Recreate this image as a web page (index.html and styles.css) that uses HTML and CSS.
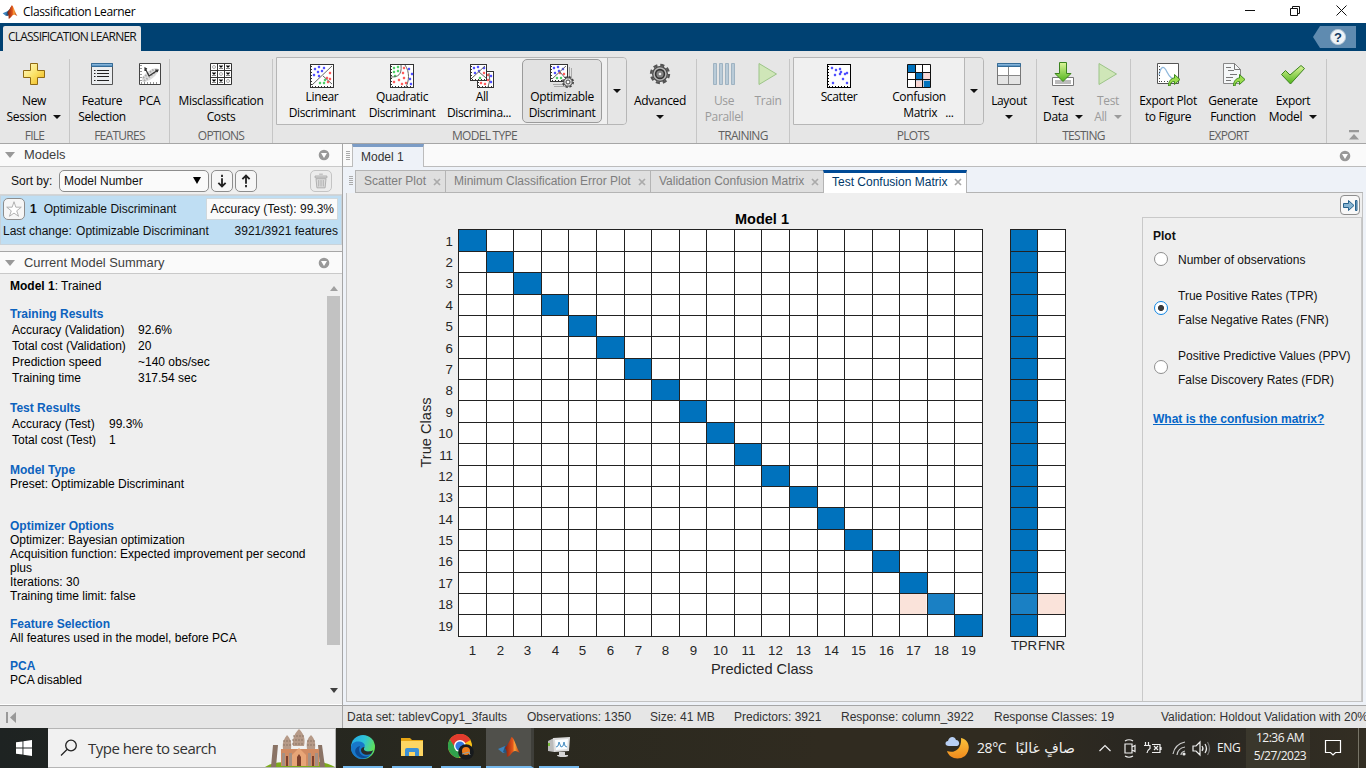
FILE: index.html
```html
<!DOCTYPE html>
<html lang="en">
<head>
<meta charset="utf-8">
<title>Classification Learner</title>
<link rel="stylesheet" href="styles.css">
</head>
<body>
<svg class="defs" width="0" height="0">
  <defs>
    <linearGradient id="gold" x1="0" y1="0" x2="1" y2="1"><stop offset="0" stop-color="#fffbd0"/><stop offset=".5" stop-color="#fbe36a"/><stop offset="1" stop-color="#eeb211"/></linearGradient>
    <linearGradient id="green" x1="0" y1="0" x2="0" y2="1"><stop offset="0" stop-color="#dcf59a"/><stop offset="1" stop-color="#52b51c"/></linearGradient>
    <linearGradient id="bluebar" x1="0" y1="0" x2="0" y2="1"><stop offset="0" stop-color="#a9cdea"/><stop offset="1" stop-color="#3d7fb4"/></linearGradient>
    <linearGradient id="flame" x1="0" y1="0" x2="1" y2="0"><stop offset="0" stop-color="#7c1e10"/><stop offset=".5" stop-color="#e2541a"/><stop offset=".65" stop-color="#f9a13a"/><stop offset="1" stop-color="#b52e0d"/></linearGradient>
    <linearGradient id="edge1" x1="0" y1="0" x2="1" y2=".4"><stop offset="0" stop-color="#23a7e8"/><stop offset=".55" stop-color="#2fc3d8"/><stop offset="1" stop-color="#5ee05a"/></linearGradient>
    <linearGradient id="moon" x1="0" y1="0" x2="0" y2="1"><stop offset="0" stop-color="#fbc33b"/><stop offset="1" stop-color="#f08a1d"/></linearGradient>
    <symbol id="matlab" viewBox="0 0 24 24">
      <path d="M1 14 8 11 11 16 6 18Z" fill="#3c83bd"/><path d="M8 11C11 9 12 7 14 3L13 14 9 18 6 17Z" fill="#26557f"/>
      <path d="M14.500 2C12 7 11 9 8 13 9 14 10 16 10 22 14 21 15 16 18 16 20 16 21 17 23 18 19 12 17 2 14.500 2Z" fill="url(#flame)"/>
    </symbol>
    <symbol id="arrow" viewBox="0 0 13 13"><path d="M1 12.500C.8 7.500 4 4.500 7 4.500V1L12.500 6 7 11V8C4 8 2.600 9.500 2.600 12.500Z" fill="#9bdc4d" stroke="#3e8b1e"/></symbol>
    <symbol id="gear" viewBox="0 0 24 24"><circle cx="12" cy="12" r="9.800" fill="none" stroke="#555" stroke-width="2.600" stroke-dasharray="4.500 3.197"/><circle cx="12" cy="12" r="8" fill="#b5b5b5" stroke="#4b4b4b" stroke-width="1.400"/><circle cx="12" cy="12" r="4.800" fill="#888" stroke="#333" stroke-width="1.700"/><circle cx="12" cy="12" r="2" fill="#eee" stroke="#555" stroke-width=".6"/></symbol>
    <symbol id="menu" viewBox="0 0 12 12"><circle cx="6" cy="6" r="5.300" fill="#999"/><path d="M3 4h6L6 9Z" fill="#fff"/></symbol>
    <symbol id="pulldown" viewBox="0 0 8 4"><path d="M0 0h8L4 4Z" fill="currentColor"/></symbol>
    <symbol id="play" viewBox="0 0 20 24"><path d="M1 1.500V22.500L18.500 12Z" fill="#cfe6b8" stroke="#9cc488"/></symbol>
    <symbol id="close" viewBox="0 0 8 8"><path d="m1 1 6 6M7 1 1 7" stroke="currentColor" stroke-width="1.700"/></symbol>
  </defs>
</svg>

<header class="titlebar">
  <svg class="app-icon" viewBox="0 0 24 24"><use href="#matlab"/></svg>
  <span class="title">Classification Learner</span>
  <svg class="winctl" viewBox="0 0 120 22" fill="none" stroke="#111"><path d="M4 10.500H14M49.500 8.500h7v7h-7ZM51.500 8.500V6.500h7v7h-2M95.500 5.500l10 10M105.500 5.500l-10 10"/></svg>
</header>

<div class="ribbon-tabs">
  <span class="ribbon-tab">CLASSIFICATION LEARNER</span>
  <svg class="help" viewBox="0 0 43 22"><path d="M7 0H43V22H7L0 11Z" fill="#5f8bb0"/><circle cx="25" cy="11" r="7.600" fill="#eef3f7" stroke="#b8c8d6"/><text x="25" y="15.500" text-anchor="middle">?</text></svg>
</div>

<div class="ribbon">
  <section class="sec file">
    <div class="tools">
      <div class="tool w66"><svg viewBox="0 0 24 24"><path d="M8.500 1.500h7v7h7v7h-7v7h-7v-7h-7v-7h7Z" fill="url(#gold)" stroke="#8f6a13"/></svg><span>New</span><span>Session <svg class="dd"><use href="#pulldown"/></svg></span></div>
    </div><h3>FILE</h3>
  </section>
  <section class="sec features">
    <div class="tools">
      <div class="tool w60"><svg viewBox="0 0 24 24"><path d="M1.500 1.500h21v21h-21z" fill="#eceef0" stroke="#555"/><path d="M1.500 1.500h21v3h-21z" fill="url(#bluebar)" stroke="#356c98"/><path d="M4 8.500h1.500m1.500 0h12M4 11.500h1.500m1.500 0h12M4 14.500h1.500m1.500 0h12M4 18.500h1.500m1.500 0h12" stroke="#222"/></svg><span>Feature</span><span>Selection</span></div>
      <div class="tool w35"><svg viewBox="0 0 24 24"><path d="M1.500 1.500h21v21h-21z" fill="#fff" stroke="#444"/><ellipse cx="12" cy="13" rx="10" ry="4" transform="rotate(-38 12 13)" fill="#ddd"/><path d="M6 19 20 8M5 16l11-9" stroke="#aaa" stroke-width="2" stroke-dasharray="1.500 1.500"/><path d="m11 14 9-6M11 14 7 6m0 3V6l2 1m8 1h3l-1 2" fill="none" stroke="#333" stroke-width="1.200"/><path d="M3 21h18M3 3v18" stroke="#333" stroke-dasharray="1 2"/></svg><span>PCA</span></div>
    </div><h3>FEATURES</h3>
  </section>
  <section class="sec options">
    <div class="tools"><div class="tool w90"><svg id="costs" viewBox="0 0 24 24"></svg><span>Misclassification</span><span>Costs</span></div></div><h3>OPTIONS</h3>
  </section>
  <section class="sec modeltype">
    <div class="tools">
      <div class="gallery models">
        <div class="cell"><svg viewBox="0 0 24 24" data-scatter="linear"></svg><span>Linear</span><span>Discriminant</span></div>
        <div class="cell"><svg viewBox="0 0 24 24" data-scatter="quadratic"></svg><span>Quadratic</span><span>Discriminant</span></div>
        <div class="cell all"><svg viewBox="0 0 24 24" data-scatter="all"></svg><span>All</span><span>Discrimina...</span></div>
        <div class="cell on"><svg viewBox="0 0 24 24" data-scatter="optim"></svg><span>Optimizable</span><span>Discriminant</span></div>
        <div class="more"><svg class="dd"><use href="#pulldown"/></svg></div>
      </div>
      <div class="tool w66"><svg viewBox="0 0 24 24"><use href="#gear" x="1" y="1" width="22" height="22"/></svg><span>Advanced</span><span><svg class="dd solo"><use href="#pulldown"/></svg></span></div>
    </div><h3>MODEL TYPE</h3>
  </section>
  <section class="sec training off">
    <div class="tools">
      <div class="tool w50"><svg viewBox="0 0 24 24"><path d="M1.500 1.500h3v21h-3zM7.500 1.500h3v21h-3zM13.500 1.500h3v21h-3zM19.500 1.500h3v21h-3z" fill="#b9cbd8" stroke="#9fb3c2"/></svg><span>Use</span><span>Parallel</span></div>
      <div class="tool w38"><svg viewBox="0 0 20 24"><use href="#play"/></svg><span>Train</span></div>
    </div><h3>TRAINING</h3>
  </section>
  <section class="sec plots">
    <div class="tools">
      <div class="gallery">
        <div class="cell"><svg viewBox="0 0 24 24" data-scatter="plain"></svg><span>Scatter</span></div>
        <div class="cell"><svg viewBox="0 0 24 24"><path d="M.5.500h23v23H.5z" fill="#fff"/><path d="M.5.500h8v8h-8zM8.500 8.500h8v8h-8zM16.500 16.500h7v7h-7z" fill="#0072bd"/><path d="M16.500 8.500h7v8h-7zM8.500 16.500h8v7h-8z" fill="#f9d8d5"/><path d="M.5.500h23v23H.5zM8.500 0v24M15.500 0v24M0 8.500h24M0 15.500h24" fill="none" stroke="#111"/></svg><span>Confusion</span><span class="cut">Matrix <i>...</i></span></div>
        <div class="more"><svg class="dd"><use href="#pulldown"/></svg></div>
      </div>
      <div class="tool w50"><svg class="wide" viewBox="0 0 26 24"><path d="M1.500 1.500h23v21h-23z" fill="#fff" stroke="#777"/><path d="M2 13h22v9H2z" fill="#e4e4e4"/><path d="M1.500 1.500h23v3h-23z" fill="url(#bluebar)" stroke="#356c98"/><path d="M12.500 5v17M2 13.500h22" stroke="#888"/></svg><span>Layout</span><span><svg class="dd solo"><use href="#pulldown"/></svg></span></div>
    </div><h3>PLOTS</h3>
  </section>
  <section class="sec testing">
    <div class="tools">
      <div class="tool w50"><svg viewBox="0 0 24 24"><path d="M1.500 15.500h21v8h-21z" fill="#fff" stroke="#777"/><path d="M4 18h16v4H4z" fill="#bbb"/><path d="M8.500.500h7v11h4.500L12 19.500 4 11.500h4.500Z" fill="url(#green)" stroke="#3b831e"/></svg><span>Test</span><span>Data <svg class="dd"><use href="#pulldown"/></svg></span></div>
      <div class="tool w40 off"><svg viewBox="0 0 20 24"><use href="#play"/></svg><span>Test</span><span>All <svg class="dd"><use href="#pulldown"/></svg></span></div>
    </div><h3>TESTING</h3>
  </section>
  <section class="sec export">
    <div class="tools">
      <div class="tool w68"><svg viewBox="0 0 24 24"><path d="M1.500 1.500h21v20h-21z" fill="#fff" stroke="#555"/><path d="M3 13C5 3 8 4 11 10S16 17 22 18" fill="none" stroke="#8fb8dc" stroke-width="1.300"/><path d="M3.500 4v16M5 19.500h9" stroke="#444" stroke-dasharray="1 2"/><use href="#arrow" x="11.500" y="11.500" width="13" height="13"/></svg><span>Export Plot</span><span>to Figure</span></div>
      <div class="tool w62"><svg viewBox="0 0 24 24"><path d="M2.500 1.500h11l6 6v14h-17z" fill="#f5f7f8" stroke="#888"/><path d="M13.500 1.500v6h6M5 5.500h5m-3 3h6m-4 4h7M5 15.500h7M5 18.500h5" fill="none" stroke="#777"/><use href="#arrow" x="11.500" y="11.500" width="13" height="13"/></svg><span>Generate</span><span>Function</span></div>
      <div class="tool w58"><svg class="wide" viewBox="0 0 26 24"><path d="M1.500 12.500 5.500 8.500 10 13 21 3.500 24.500 6.500 10.500 22Z" fill="url(#green)" stroke="#3b831e"/></svg><span>Export</span><span>Model <svg class="dd"><use href="#pulldown"/></svg></span></div>
    </div><h3>EXPORT</h3>
  </section>
  <svg class="minimize" viewBox="0 0 12 11"><path d="M1 0h10v2.200H1zM6 4l5 5.500H1Z" fill="#999"/></svg>
</div>

<main class="work">
  <aside class="left">
    <div class="head"><i class="tri"></i><span>Models</span><svg><use href="#menu"/></svg></div>
    <div class="sort">
      <span class="lbl">Sort by:</span>
      <div class="select"><span>Model Number</span><svg viewBox="0 0 8 7"><path d="M0 0h8L4 7Z"/></svg></div>
      <div class="btn"><svg viewBox="0 0 22 22" fill="none" stroke="#222" stroke-width="2"><path d="M11 4v2.500M11 8v9M7 13l4 4 4-4"/></svg></div>
      <div class="btn"><svg viewBox="0 0 22 22" fill="none" stroke="#222" stroke-width="2"><path d="M11 18v-2.500M11 14V5M7 9l4-4 4 4"/></svg></div>
      <div class="btn trash"><svg viewBox="0 0 22 22" fill="#ddd" stroke="#aaa"><path d="M9 3.500h4M4.500 5.500h13v2h-13zM5.500 8.500h11l-1 10h-9zM8.500 10v7M11 10v7M13.500 10v7"/></svg></div>
    </div>
    <div class="model">
      <div class="row"><div class="btn star"><svg viewBox="0 0 22 22"><path d="m11 3 2 6h6l-5 4 2 6-5-3.500L6 19l2-6-5-4h6Z" fill="#fff" stroke="#aaa"/></svg></div><b>1</b><span>Optimizable Discriminant</span><div class="acc">Accuracy (Test): <em>99.3%</em></div></div>
      <div class="row2"><span>Last change: <em>Optimizable Discriminant</em></span><span>3921/3921 features</span></div>
    </div>
    <div class="head second"><i class="tri"></i><span>Current Model Summary</span><svg><use href="#menu"/></svg></div>
    <div class="summary">
      <div class="text">
        <p class="first"><b>Model 1</b>: Trained</p>
        <h4>Training Results</h4>
        <dl class="wide-dl"><dt>Accuracy (Validation)</dt><dd>92.6%</dd><dt>Total cost (Validation)</dt><dd>20</dd><dt>Prediction speed</dt><dd>~140 obs/sec</dd><dt>Training time</dt><dd>317.54 sec</dd></dl>
        <h4>Test Results</h4>
        <dl><dt>Accuracy (Test)</dt><dd>99.3%</dd><dt>Total cost (Test)</dt><dd>1</dd></dl>
        <h4>Model Type</h4>
        <p class="preset">Preset: Optimizable Discriminant</p>
        <h4>Optimizer Options</h4>
        <p>Optimizer: Bayesian optimization<br>Acquisition function: Expected improvement per second<br>plus<br>Iterations: 30<br>Training time limit: false</p>
        <h4>Feature Selection</h4>
        <p>All features used in the model, before PCA</p>
        <h4>PCA</h4>
        <p>PCA disabled</p>
      </div>
      <div class="scroll"><i class="up"></i><i class="thumb"></i><i class="down"></i></div>
    </div>
  </aside>

  <div class="right">
    <div class="doc-tabs"><i class="grip"></i><span class="doc-tab">Model 1</span><svg><use href="#menu"/></svg></div>
    <div class="fig-tabs"><i class="grip"></i>
      <span class="tab t1">Scatter Plot<svg><use href="#close"/></svg></span>
      <span class="tab t2">Minimum Classification Error Plot<svg><use href="#close"/></svg></span>
      <span class="tab t3">Validation Confusion Matrix<svg><use href="#close"/></svg></span>
      <span class="tab t4">Test Confusion Matrix<svg><use href="#close"/></svg></span>
      <i class="rest"></i>
    </div>
    <div class="figure">
      <svg id="chart" width="795" height="508" viewBox="347 193 795 508"></svg>
      <div class="side">
        <div class="collapse"><svg viewBox="0 0 18 18"><path d="M2.500 7.500h5V4.500L13 9.500l-5.500 5v-3h-5ZM14.500 4.500v10h1.500V4.500Z" fill="#86b4d2" stroke="#27618c"/></svg></div>
        <div class="panel">
          <h5>Plot</h5>
          <label class="opt o1"><i></i><span>Number of observations</span></label>
          <label class="opt o2"><i class="sel"></i><span>True Positive Rates (TPR)<br>False Negative Rates (FNR)</span></label>
          <label class="opt o3"><i></i><span>Positive Predictive Values (PPV)<br>False Discovery Rates (FDR)</span></label>
          <a>What is the confusion matrix?</a>
        </div>
      </div>
    </div>
  </div>
</main>

<footer class="status">
  <div class="status-left"><svg viewBox="0 0 11 11"><path d="M0 0h2v11H0zM10 0v11L4 5.500Z" fill="#999"/></svg></div>
  <div class="status-right"><span class="s1">Data set: tablevCopy1_3faults</span><span class="s2">Observations: 1350</span><span class="s3">Size: 41 MB</span><span class="s4">Predictors: 3921</span><span class="s5">Response: column_3922</span><span class="s6">Response Classes: 19</span><span class="s7">Validation: Holdout Validation with 20%</span></div>
</footer>

<nav class="taskbar">
  <div class="start"><svg viewBox="0 0 16 16" fill="#fff"><path d="M0 2.300 6.500 1.400V7.500H0ZM7.400 1.200 16 0V7.500H7.400ZM0 8.400H6.500V14.600L0 13.700ZM7.400 8.400H16V16L7.400 14.800Z"/></svg></div>
  <div class="search">
    <svg class="mag" viewBox="0 0 18 18" fill="none" stroke="#222" stroke-width="1.300"><circle cx="11" cy="6.500" r="5.300"/><path d="M7 10.500 1 16.500"/></svg>
    <span>Type here to search</span>
    <svg class="temple" viewBox="0 0 70 38">
      <path d="M0 38C10 31 22 34 35 33S60 32 70 38Z" fill="#7cab1c"/>
      <path d="M8 16h5L11 38H6ZM53 16h4l3 22h-5Z" fill="#8a7365"/>
      <path d="M16 20h38v17H16z" fill="#d18b62"/>
      <path d="M18 20C17 12 20 9 22 6 25 9 27 13 26 20ZM28 17C27 8 31 3 34 0 38 4 41 9 39 17ZM42 20C41 12 43 9 46 6 49 9 51 13 50 20Z" fill="#b69a88"/>
      <path d="M18 12h8m-8 4h8m2-9h11m-12 4h12m-12 4h12m3-3h8m-8 4h8" stroke="#8d7667" stroke-dasharray="2 1"/>
      <path d="M17 24h3v13h-3zM24 24h3v13h-3zM43 24h3v13h-3zM50 24h3v13h-3z" fill="#a49084"/>
      <path d="M27 26 34 19l7 7v11H27Z" fill="#e8a577"/><path d="M32 37V28l2-3 2 3v9ZM21 37V27h2v10ZM47 37V27h2v10Z" fill="#7b3f2c"/>
    </svg>
  </div>
  <div class="app a1"><svg viewBox="0 0 24 24"><circle cx="12" cy="12" r="12" fill="url(#edge1)"/><path d="M0 13C0 8 4 6 8 6.500c5 .5 6.500 3.500 5.500 5.500-1 1.500-1 4 3 4.500 2 .3 4 0 5.500-.5C20 21 16 24 11 24 5 24 0 19 0 13Z" fill="#1877c9"/><path d="M9 11C6 17 11 23 18 21 15 24 8 24 5 19 3 15 5 12 9 11Z" fill="#0d4a93"/><path d="M13.500 12c-1 2-1 4 3 4.500 3 .3 5-.8 5.700-1.200L20 19c-5 2-10 0-10-4 0-2 2-3 3.500-3Z" fill="#2b2b28"/></svg></div>
  <div class="app a2"><svg viewBox="0 0 24 24"><path d="M1 3h9l2 2h11v16H1Z" fill="#e7a614"/><path d="M1 6h22v15H1Z" fill="#fdd663"/><path d="M5 21v-6q0-2 2-2h10q2 0 2 2v6h-4v-4H9v4Z" fill="#3c91d6"/></svg></div>
  <div class="app a3"><svg viewBox="0 0 26 26"><circle cx="12" cy="12" r="12" fill="#fbc116"/><path d="M12 12L22.500 6A12 12 0 0 0 1.800 5.500L7 15Z" fill="#e33b2e"/><path d="M1.800 5.500A12 12 0 0 0 11 24l5-9H8Z" fill="#30a24c"/><circle cx="12" cy="12" r="6" fill="#fff"/><circle cx="12" cy="12" r="4.600" fill="#3479e0"/><circle cx="18" cy="18" r="7.800" fill="#171a1c"/><circle cx="18" cy="17" r="4" fill="#ed7d1b"/><path d="m14 20 7-2 1 3" stroke="#8da0a8" fill="none"/></svg></div>
  <div class="app a4"><svg viewBox="0 0 24 24"><use href="#matlab"/></svg></div>
  <div class="app a5"><svg viewBox="0 0 24 24"><path d="M1 6 7 3v14l-6-1Z" fill="#bbb"/><path d="M1 8h2v3H1z" fill="#77bc37"/><path d="M6 3 23 2l-1 14-15 1Z" fill="#ddd"/><path d="M8 5 21 4l-1 10-11 1Z" fill="#fafdff"/><path d="m9 12 2-1 1-4 2 5 2-1 1-4 1 4 2 1" fill="none" stroke="#468dc1"/><path d="M12 17h6v3h3q1 2-5 2t-6-2h2Z" fill="#d5d5d5"/></svg></div>
  <div class="tray">
    <svg class="weather" viewBox="0 0 24 24"><path d="M16 2C25 4 26 14 20 20 13 25 4 22 2 15 10 18 17 12 16 2Z" fill="url(#moon)"/><path d="M4 10C-1 10 0 5 3 5 4 0 10 0 11 4 15 4 15 10 12 10Z" fill="#b9d0f4"/></svg>
    <span class="temp">28°C</span><span class="ar" dir="rtl">صافٍ غالبًا</span>
    <svg class="sys" viewBox="0 0 122 24" fill="none" stroke="#eee" stroke-width="1.200">
      <path d="m4.500 15 5.500-5.500 5.500 5.500"/>
      <path d="M30 8h7v9h-7ZM37 11l3-1.500v6L37 14M30 5q4-2.500 8 0M30 20q4 2.500 8 0"/>
      <path d="M50.500 6v4M53.500 6v4M49 9.500h6v3q-3 2-3 4.500M57 8.500h8v8h-8M66 11v3M59 10l4 4m0-4-4 4"/>
      <path d="M78 18Q80 8 90 6M82 19Q83 12 90 11M86 19Q86 16 90 15" stroke="#ccc"/><circle cx="89" cy="18" r="1" fill="#fff"/>
      <path d="M98 10h3l4-4v13l-4-4h-3ZM107 10q2 2.500 0 5M110 8q3 4.500 0 9"/><path d="M112.500 6q4 6.500 0 13" stroke="#777"/>
    </svg>
    <span class="lang">ENG</span>
    <span class="clock">12:36 AM<br>5/27/2023</span>
    <svg class="note" viewBox="0 0 18 18" fill="none" stroke="#fff" stroke-width="1.200"><path d="M1.500 1.500h15v12h-5L9 16l-2.500-2.500h-5Z"/></svg>
    <i class="peek"></i>
  </div>
</nav>
<script src="app.js"></script>
</body>
</html>
```
FILE: styles.css
```css
* { box-sizing: border-box; }
body { margin: 0; width: 1366px; height: 768px; overflow: hidden; display: flex; flex-direction: column; font: 12px/16px "Liberation Sans", Arial, sans-serif; color: #111; background: #efefef; }
h3, h4, h5, p, dl, dd { margin: 0; }
svg { display: block; flex: none; }
i, em { font-style: normal; }
.defs { position: absolute; }

.titlebar { height: 23px; flex: none; background: #fff; display: flex; align-items: center; padding-left: 2px; font-family: "Open Sans", "Noto Sans", sans-serif; letter-spacing: -.34px; }
.app-icon { width: 16px; height: 16px; margin-right: 5px; }
.title { font-size: 12px; color: #000; }
.winctl { width: 120px; height: 22px; margin: 0 5px 1px auto; }
.ribbon-tabs { height: 28px; flex: none; background: #004172; display: flex; align-items: flex-end; justify-content: space-between; padding-left: 3px; }
.ribbon-tab { width: 138px; height: 25px; background: #e6e6e6; padding-left: 5px; border-radius: 2px 2px 0 0; font: 12px/22px "Open Sans", "Noto Sans", sans-serif; letter-spacing: -.78px; white-space: nowrap; }
.help { width: 43px; height: 22px; margin: 0 10px 3px 0; }
.help text { font: bold 13px "Liberation Sans", sans-serif; fill: #123a60; }

.ribbon { height: 93px; flex: none; background: #e6e6e6; border-bottom: 1px solid #a6a6a6; display: flex; font-family: "Open Sans", "Noto Sans", sans-serif; letter-spacing: -.35px; color: #000; }
.sec { height: 84px; margin-top: 8px; border-right: 1px solid #c6c6c6; display: flex; flex-direction: column; flex: none; }
.sec h3 { font-weight: 400; font-size: 12px; line-height: 14px; text-align: center; color: #5f5f5f; letter-spacing: -.72px; }
.tools { height: 70px; display: flex; align-items: flex-start; }
.file { width: 70px; } .features { width: 100px; } .options { width: 103px; } .modeltype { width: 424px; } .training { width: 93px; } .plots { width: 247px; } .testing { width: 94px; } .export { width: 196px; }
.file .tools { padding-left: 1px; } .features .tools { padding-left: 2px; } .options .tools { padding-left: 6px; }
.training .tools { padding-left: 2px; } .testing .tools { padding-left: 1px; } .export .tools { padding-left: 3px; }
.tool, .cell { display: flex; flex-direction: column; align-items: center; white-space: nowrap; }
.tool > svg { width: 24px; height: 24px; margin: 3px 0 7px; }
.tool > svg.wide { width: 26px; }
.tool span, .cell span { height: 16px; line-height: 16px; display: flex; align-items: center; gap: 7px; }
.w66 { width: 66px; } .w60 { width: 60px; } .w35 { width: 35px; } .w90 { width: 90px; } .w50 { width: 50px; } .w38 { width: 38px; } .w40 { width: 40px; } .w68 { width: 68px; } .w62 { width: 62px; } .w58 { width: 58px; }
.dd { width: 8px; height: 4px; color: #111; }
.off { color: #9b9b9b; }
.off .dd { color: #9b9b9b; }
.gallery { height: 68px; margin: -2px 0 0 3px; border: 1px solid #b6b6b6; border-radius: 0 4px 4px 0; background: #f0f0f0; display: flex; padding-left: 5px; }
.gallery .cell { width: 80px; height: 64px; margin-top: 1px; padding-top: 4px; border: 1px solid transparent; }
.gallery .cell svg { width: 24px; height: 24px; margin-bottom: 1px; }
.gallery .cell.all span + span { padding-right: 6px; }
.gallery .cell.on { border-color: #9b9b9b; border-radius: 5px; background: #e2e2e2; }
.gallery .more { width: 19px; margin-left: 5px; border-left: 1px solid #b6b6b6; background: #e6e6e6; border-radius: 0 4px 4px 0; display: flex; align-items: center; justify-content: center; }
.cell .cut { padding-left: 19px; gap: 8px; }
.minimize { width: 12px; height: 11px; margin: 79px 0 0 21px; }

.work { height: 561px; flex: none; display: flex; }
.left { width: 343px; border-right: 1px solid #a6a6a6; display: flex; flex-direction: column; }
.head { height: 23px; flex: none; display: flex; align-items: center; background: #fafafa; border-bottom: 1px solid #c9c9c9; color: #404040; padding: 0 12px 0 5px; font-size: 12.900px; }
.head svg { width: 12px; height: 12px; margin-left: auto; }
.tri { border: 5px solid transparent; border-top: 6px solid #999; border-bottom: 0; margin-right: 9px; }
.sort { height: 28px; flex: none; display: flex; align-items: center; padding: 0 10px 0 11px; border-bottom: 1px solid #d5d5d5; }
.lbl { width: 48px; }
.select { width: 150px; height: 22px; border: 1px solid #8d8d8d; border-radius: 5px; background: #fafafa; display: flex; align-items: center; justify-content: space-between; padding: 0 7px 0 4px; }
.select svg { width: 8px; height: 7px; }
.btn { width: 22px; height: 22px; flex: none; border: 1px solid #8d8d8d; border-radius: 5px; background: #f6f6f6; margin-left: 2px; display: flex; }
.btn svg { width: 20px; height: 20px; }
.trash { margin-left: auto; border-color: #c4c4c4; background: #ececec; }
.model { height: 50px; flex: none; background: #bfdef3; border: 1px solid #c9d3da; padding: 2px 3px 0 2px; }
.row { height: 22px; display: flex; align-items: center; }
.star { margin: 0 5px 0 0; }
.row b { margin-right: 7px; }
.acc { height: 22px; line-height: 20px; margin-left: auto; padding: 0 3px 0 4px; background: #fafafa; border: 1px solid #d0d8dc; }
.row2 { display: flex; justify-content: space-between; padding-top: 2px; line-height: 18px; }
.row2 em { padding-left: 1px; }
.second { height: 23px; margin-top: 6px; border-top: 1px solid #a6a6a6; }
.summary { flex: 1; display: flex; justify-content: space-between; min-height: 0; border-bottom: 1px solid #fff; }
.text { width: 325px; line-height: 14px; padding: 5px 0 0 10px; white-space: nowrap; color: #000; }
.first { margin-bottom: 14px; }
.text h4 { font-size: 12px; line-height: 14px; color: #0c62be; margin-top: 14px; }
.text dl { display: grid; grid-template-columns: 97px 1fr; line-height: 16px; padding: 1px 0 0 2px; margin-bottom: 15px; }
.text dl.wide-dl { grid-template-columns: 126px 1fr; }
.text .first + h4, .text dl + h4 { margin-top: 0; }
.text .preset { margin-bottom: 28px; }
.scroll { width: 17px; display: flex; flex-direction: column; align-items: center; padding: 12px 0 11px; }
.up { border: 4px solid transparent; border-bottom: 5px solid #a0a0a0; border-top: 0; }
.thumb { width: 13px; height: 349px; background: #c2c2c2; margin-top: 5px; }
.down { border: 4px solid transparent; border-top: 5px solid #404040; border-bottom: 0; margin-top: auto; }

.right { width: 1023px; background: #eef2f8; display: flex; flex-direction: column; }
.doc-tabs { height: 23px; flex: none; display: flex; align-items: center; background: linear-gradient(#bcbcbc, #bcbcbc) bottom / 100% 1px no-repeat #fafafa; padding: 0 15px 0 3px; }
.grip { width: 4px; height: 10px; background: repeating-linear-gradient(#aaa 0 1px, transparent 1px 2px); }
.doc-tab { width: 72px; height: 23px; margin-left: 2px; border: 1px solid #bcbcbc; border-width: 3px 1px 0; border-top-color: #7b9cc6; background: #eef2f8; line-height: 20px; padding-left: 8px; color: #333; }
.doc-tabs svg { width: 12px; height: 12px; margin-left: auto; }
.fig-tabs { height: 26px; flex: none; display: flex; align-items: flex-end; padding-right: 3px; }
.fig-tabs .grip { margin: 0 0 7px 6px; }
.tab { height: 23px; border: 1px solid #b4b4b4; border-right: 0; background: #dfdfdf; color: #7d7d7d; line-height: 21px; display: flex; justify-content: space-between; align-items: center; padding: 0 4px 0 8px; }
.tab svg { width: 8px; height: 8px; color: #aaa; }
.fig-tabs .t1 { width: 90px; margin-left: 2px; } .t2 { width: 205px; } .t3 { width: 173px; }
.tab.t4 { width: 144px; background: #fff; color: #003768; border-top: 3px solid #004a96; border-right: 1px solid #b4b4b4; border-bottom: 0; line-height: 18px; padding-bottom: 2px; }
.rest { flex: 1; border-bottom: 1px solid #b4b4b4; }
.figure { width: 1017px; height: 509px; margin-left: 3px; border: 1px solid #c2c2c2; border-top: 0; background: #efefef; display: flex; }
#chart text { font-family: "Liberation Sans", Arial, sans-serif; fill: #262626; }
.tick { font-size: 13.300px; }
.axis { font-size: 14.600px; }
#chart .chart-title { font-size: 14.500px; font-weight: 700; fill: #000; }
.side { width: 220px; display: flex; flex-direction: column; align-items: flex-end; }
.collapse { width: 20px; height: 20px; margin: 2px 2px 2px 0; border: 1px solid #8d8d8d; border-radius: 4px; background: #f8f8f8; }
.collapse svg { width: 18px; height: 18px; }
.panel { width: 220px; flex: 1; border: 1px solid #c9c9c9; border-width: 1px 1px 0; padding: 6px 0 0 10px; line-height: 24px; white-space: nowrap; }
.panel h5 { font-size: 12px; }
.opt { display: flex; align-items: center; gap: 10px; }
.opt i { width: 14px; height: 14px; margin: 0 0 2px 1px; border: 1px solid #8f8f8f; border-radius: 50%; background: #fff; }
.opt i.sel { margin-bottom: 0; border: 1px solid #0d84e3; background: radial-gradient(circle, #3b3b3b 0 2.700px, #fff 3.400px); }
.o2 { margin-top: 12px; } .o3 { margin-top: 12px; }
.panel a { display: block; margin-top: 15px; color: #0566c7; font-weight: 700; text-decoration: underline; }

.status { height: 23px; flex: none; display: flex; background: #e6e6e6; border-top: 1px solid #a6a6a6; color: #333; }
.status-left { width: 343px; border-right: 1px solid #a6a6a6; padding: 6px; }
.status-left svg { width: 11px; height: 11px; }
.status-right { width: 1023px; display: flex; line-height: 22px; padding-left: 4px; overflow: hidden; white-space: nowrap; }
.status-right span { flex: none; }
.s1 { width: 180px; } .s2 { width: 123px; } .s3 { width: 84px; } .s4 { width: 107px; } .s5 { width: 153px; } .s6 { width: 167px; }

.taskbar { height: 40px; flex: none; display: flex; background: linear-gradient(90deg, #1e2322, #28281f 30%, #302b20 60%, #302b20 75%, #292722 84%, #292722 87%, #332e23); color: #f2f2f2; font-family: "Open Sans", "Noto Sans", sans-serif; }
.start { width: 48px; display: flex; align-items: center; justify-content: center; }
.start svg { width: 16px; height: 16px; }
.search { width: 288px; background: #f1f1f1; border: 1px solid #b5b5b5; border-left: 0; display: flex; align-items: center; color: #333; font-size: 15px; letter-spacing: -.52px; padding-right: 0; }
.mag { width: 18px; height: 18px; margin: 0 10px 0 12px; }
.temple { width: 70px; height: 38px; margin-left: auto; }
.app { width: 40px; height: 40px; margin-left: 9px; border-bottom: 2px solid #76b9ed; display: flex; align-items: center; justify-content: center; }
.app svg { width: 24px; height: 24px; }
.app.a1 { margin-left: 7px; }
.app.a3 svg { width: 26px; height: 26px; }
.app.a4 { width: 48px; margin-left: 5px; background: #50504b; border-right: 3px solid #3f3f3a; }
.app.a5 { margin-left: 5px; }
.tray { margin-left: auto; display: flex; align-items: center; font-size: 12px; }
.weather { width: 24px; height: 24px; margin-right: 8px; }
.temp { width: 38px; font-size: 14px; letter-spacing: -.4px; }
.ar { width: 60px; font-size: 14px; font-family: "DejaVu Sans", sans-serif; letter-spacing: 0; white-space: nowrap; }
.sys { width: 122px; height: 24px; margin-left: 20px; }
.lang { width: 29px; letter-spacing: -.4px; }
.clock { width: 64px; height: 40px; background: #3a372c; text-align: center; line-height: 18px; padding: 1px 0 0 4px; letter-spacing: -.5px; }
.note { width: 18px; height: 18px; margin-left: 14px; }
.peek { width: 1px; height: 40px; margin: 0 7px 0 16px; background: #777467; }
```
FILE: app.js
```js
const BLUE = '#0072bd';
const GRID = '#222';

// Confusion matrix with its row summary
const N = 19, X0 = 458.5, Y0 = 229.5, W = 524, H = 407;
const colX = i => Math.round(458.1 + i * 27.57) + 0.5;
const rowY = i => Math.round(229.4 + i * 21.385) + 0.5;
const rect = (x, y, w, h, fill) => `<rect x="${x}" y="${y}" width="${w}" height="${h}" fill="${fill}"/>`;
const text = (x, y, cls, anchor, s, extra = '') => `<text x="${x}" y="${y}" class="${cls}" text-anchor="${anchor}" ${extra}>${s}</text>`;

let out = rect(X0, Y0, W, H, '#fff') + rect(1010.5, Y0, 55, H, '#fff');
for (let i = 0; i < N; i++) {
  const h = rowY(i + 1) - rowY(i);
  const shade = i === 17 ? '#1a80c4' : BLUE;
  out += rect(colX(i), rowY(i), colX(i + 1) - colX(i), h, shade);
  out += rect(1010.5, rowY(i), 27, h, shade);
  out += text(453, Math.round(245.7 + i * 21.385), 'tick', 'end', i + 1);
  out += text(colX(i) + 14, 655, 'tick', 'middle', i + 1);
}
out += rect(colX(16), rowY(17), 27, 21, '#fae3da') + rect(1037.5, rowY(17), 28, 21, '#fae3da');
let d = '';
for (let i = 0; i <= N; i++) {
  d += `M${colX(i)} 229V637M458 ${rowY(i)}H983M1010 ${rowY(i)}H1066`;
}
d += 'M1010.5 229V637M1037.5 229V637M1065.5 229V637';
out += `<path d="${d}" fill="none" stroke="${GRID}" shape-rendering="crispEdges"/>`;
out += text(762, 224, 'chart-title', 'middle', 'Model 1');
out += text(762, 674, 'axis', 'middle', 'Predicted Class');
out += text(0, 0, 'axis', 'middle', 'True Class', 'transform="translate(431 432.5) rotate(-90)"');
out += text(1011, 650, 'tick', 'start', 'TPR', 'textLength="26"');
out += text(1038, 650, 'tick', 'start', 'FNR', 'textLength="27"');
document.getElementById('chart').innerHTML = out;

// Scatter thumbnails used in the galleries
const dots = (list, color) => list.map(([x, y]) => `<path d="M${x - 1.2} ${y}h2.400M${x} ${y - 1.2}v2.400" stroke="${color}" stroke-width="1.100"/>`).join('');
const frame = (x, y, s) => `<rect x="${x + .5}" y="${y + .5}" width="${s - 1}" height="${s - 1}" fill="#fff" stroke="#333"/><path d="M${x + 2} ${y + s - 1.5}h${s - 3}M${x + 1.500} ${y + 2}v${s - 3}" stroke="#333" stroke-dasharray="1 2"/>`;
const B = '#2020ff', R = '#ff3030', G = '#20c040', L = 'fill="none" stroke="#666" stroke-width="1"';
const art = {
  linear: frame(0, 0, 24) + dots([[5, 5], [9, 3], [14, 4], [12, 7], [8, 8], [4, 11], [9, 12]], B) + dots([[20, 9], [17, 14], [20, 15], [18, 18]], R) + dots([[10, 19], [14, 19], [15, 16]], G) + `<path d="M22 2 2 21M13 12l9 8" ${L}/>`,
  quadratic: frame(0, 0, 24) + dots([[4, 4], [8, 3], [4, 8], [8, 7], [5, 12]], G) + dots([[14, 4], [13, 9], [14, 14], [4, 18], [9, 16], [12, 20], [16, 19]], R) + dots([[19, 5], [22, 10], [20, 15], [21, 20]], B) + `<path d="M11 1C12 11 8 13 1 13M15 1C20 8 19 17 16 23" ${L}/>`,
  all: frame(7, 7, 17) + dots([[18, 11], [11, 19], [15, 20], [18, 16]], R) + dots([[21, 12], [21, 18]], B) + frame(0, 0, 17) + dots([[4, 4], [8, 3], [5, 9], [9, 7], [14, 4]], B) + dots([[14, 9]], R) + dots([[10, 14]], G) + `<path d="M15 2 2 14M9 8l7 6M19 9q2 8-1 14" ${L}/>`,
  optim: `<path d="M4 22.500h12M21.500 4v12M3 20.500h14M19.500 3v13" stroke="#aaa"/>` + frame(0, 0, 18) + dots([[4, 4], [8, 3], [5, 9], [9, 7], [13, 5]], B) + dots([[14, 10], [10, 9]], R) + dots([[7, 14], [11, 14]], G) + `<path d="M16 2 2 15M10 8l6 7" ${L}/><circle cx="18" cy="18" r="5.200" fill="none" stroke="#444" stroke-width="1.600" stroke-dasharray="2.300 1.784"/><circle cx="18" cy="18" r="4.200" fill="#ddd" stroke="#444"/><circle cx="18" cy="18" r="2" fill="#fff" stroke="#444"/>`,
  plain: frame(0, 0, 24).replaceAll('#333', '#000') + dots([[5, 4], [9, 6], [13, 5], [8, 11], [13, 10], [14, 8], [18, 10], [20, 9], [16, 15], [6, 19], [20, 19]], B)
};
document.querySelectorAll('[data-scatter]').forEach(el => { el.innerHTML = art[el.dataset.scatter]; });

// Cost table: circles on the diagonal, crosses elsewhere
let cost = '<path d="M1.500 1.500h21v21h-21z" fill="#fff" stroke="#333"/><path d="M8.500 1v22M15.500 1v22M1 8.500h22M1 15.500h22" stroke="#333"/>';
for (let r = 0; r < 3; r++) for (let c = 0; c < 3; c++) {
  const x = 5 + c * 7, y = 5 + r * 7;
  cost += r === c ? `<circle cx="${x}" cy="${y}" r="1.500" fill="none" stroke="#aaa"/>` : `<path d="m${x - 1.5} ${y - 1.5} 3 3m0-3-3 3" stroke="#000" stroke-width="1.300"/>`;
}
document.getElementById('costs').innerHTML = cost;
```
